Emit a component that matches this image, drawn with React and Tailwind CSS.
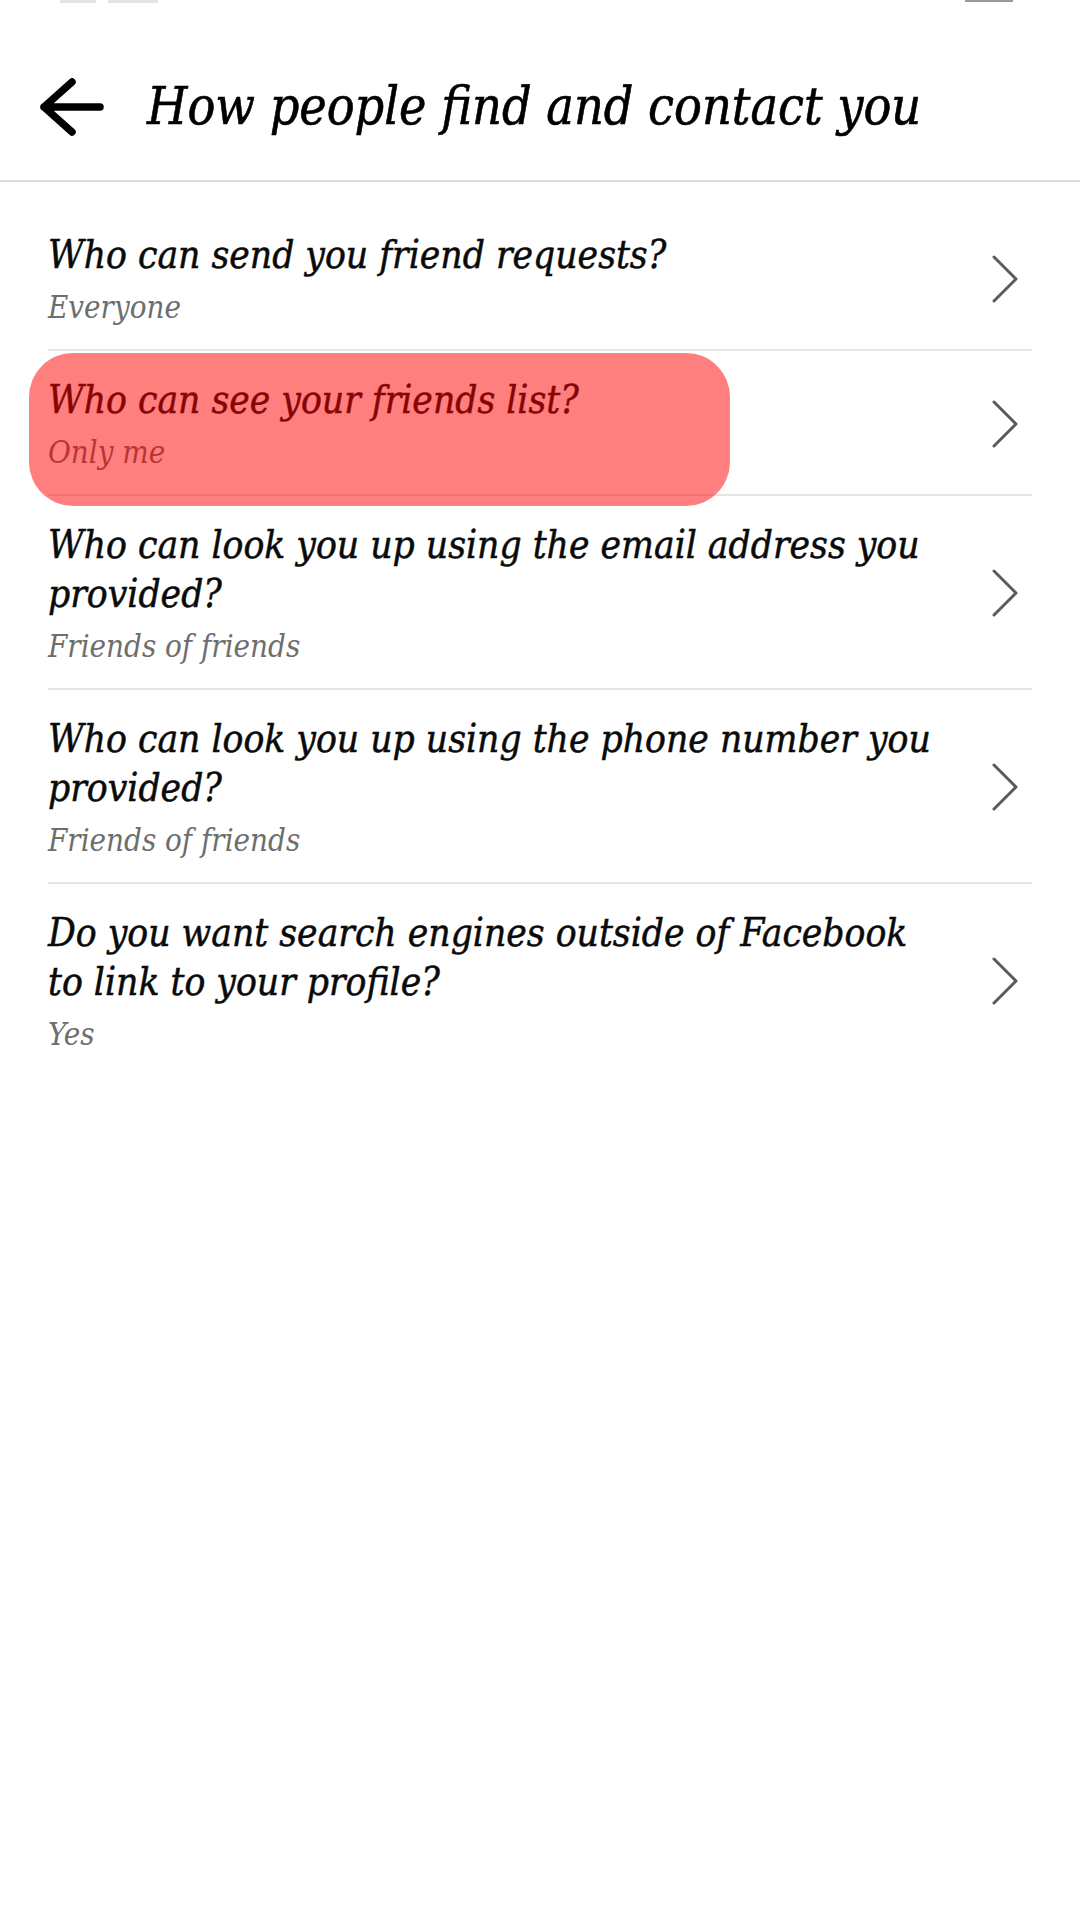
import React from "react";

const rows = [
  { title: ["Who can send you friend requests?"], sub: "Everyone" },
  { title: ["Who can see your friends list?"], sub: "Only me", highlight: true },
  { title: ["Who can look you up using the email address you", "provided?"], sub: "Friends of friends" },
  { title: ["Who can look you up using the phone number you", "provided?"], sub: "Friends of friends" },
  { title: ["Do you want search engines outside of Facebook", "to link to your profile?"], sub: "Yes" },
];

const serif = { fontFamily: '"DejaVu Serif Condensed", "DejaVu Serif", serif' };

function Chevron() {
  return (
    <svg width="30" height="50" viewBox="0 0 30 50" className="shrink-0">
      <path d="M4 3 L26 25 L4 47" fill="none" stroke="#5a5a5a" strokeWidth="3" strokeLinecap="round" strokeLinejoin="round" />
    </svg>
  );
}

export default function App() {
  return (
    <div className="w-[1080px] h-[1920px] bg-white relative overflow-hidden" style={serif}>
      <div className="absolute top-0 left-[60px] h-[4px] flex gap-[12px]">
        <div className="h-[3px] w-[36px] bg-[#e4e4e4]" />
        <div className="h-[3px] w-[50px] bg-[#e4e4e4]" />
      </div>
      <div className="absolute top-0 left-[965px] h-[2px] w-[48px] bg-[#9a9a9a]" />
      <div className="h-[182px] border-b-2 border-[#d9d9d9] flex items-center pl-[38px] pt-[34px]">
        <svg width="68" height="60" viewBox="0 0 68 60" className="shrink-0">
          <path d="M62 30 H6 M34 5 L6 30 L34 55" fill="none" stroke="#000" strokeWidth="7.5" strokeLinecap="round" strokeLinejoin="round" />
        </svg>
        <div className="ml-[41px] italic text-[51.5px] leading-none text-black [-webkit-text-stroke:0.6px_#000]">How people find and contact you</div>
      </div>
      <div className="mx-[48px] pt-[24px]">
        {rows.map((r, i) => (
          <div key={i} className={`relative flex items-center pt-[24px] pb-[22px] ${i < rows.length - 1 ? "border-b-2 border-[#e6e6e6]" : ""}`}>
            {r.highlight && (
              <div className="absolute left-[-19px] top-[2px] w-[701px] h-[153px] rounded-[44px] bg-[#ff0000]/50 z-10" />
            )}
            <div className="flex-1 min-w-0">
              {r.title.map((t, j) => (
                <div key={j} className="italic text-[38.6px] leading-[49px] text-[#0a0a0a] whitespace-nowrap [-webkit-text-stroke:0.5px_#0a0a0a]">{t}</div>
              ))}
              <div className="italic text-[31px] leading-[40px] mt-[8px] text-[#6e6e6e]">{r.sub}</div>
            </div>
            <div className="mr-[12px]">
              <Chevron />
            </div>
          </div>
        ))}
      </div>
    </div>
  );
}
